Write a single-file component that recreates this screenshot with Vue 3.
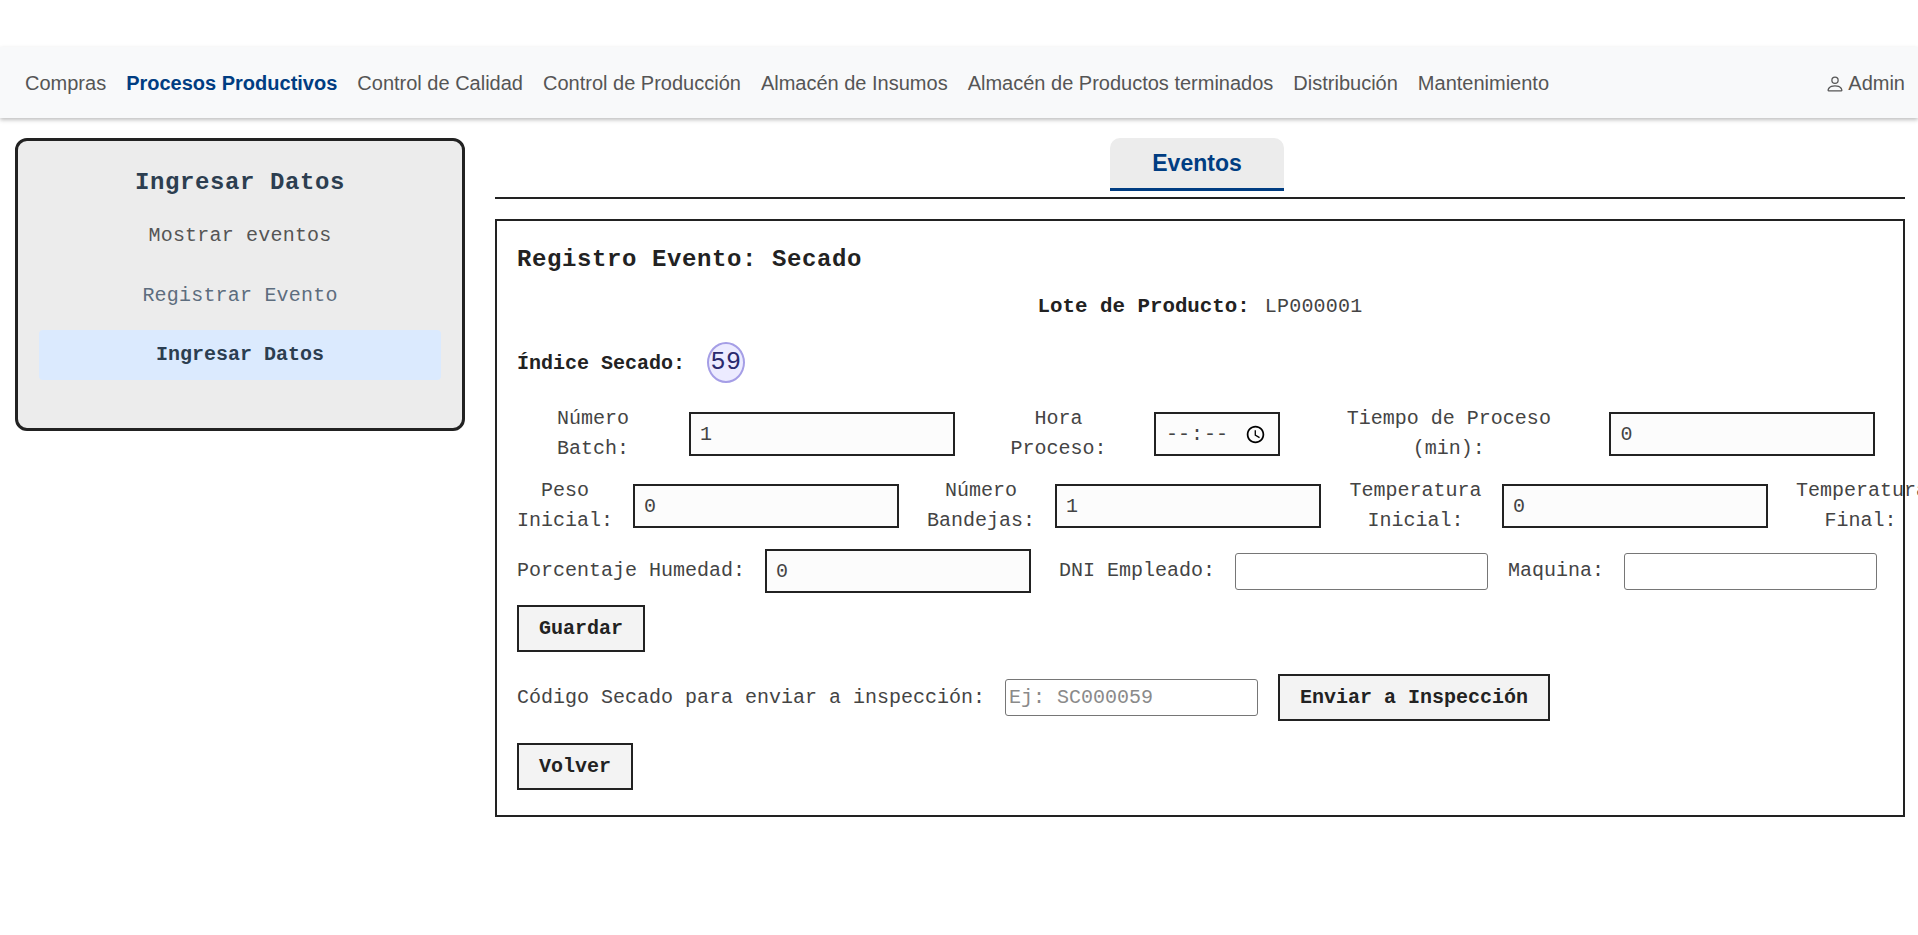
<template>
  <div class="page">
    <nav class="navbar">
      <a
        v-for="link in navLinks"
        :key="link"
        class="nav-link"
        :class="{ active: link === 'Procesos Productivos' }"
      >{{ link }}</a>
      <a class="nav-user">
        <svg width="20" height="20" viewBox="0 0 16 16" fill="currentColor">
          <path d="M8 8a3 3 0 1 0 0-6 3 3 0 0 0 0 6m2-3a2 2 0 1 1-4 0 2 2 0 0 1 4 0m4 8c0 1-1 1-1 1H3s-1 0-1-1 1-4 6-4 6 3 6 4m-1-.004c-.001-.246-.154-.986-.832-1.664C11.516 10.68 10.289 10 8 10s-3.516.68-4.168 1.332c-.678.678-.83 1.418-.832 1.664z" />
        </svg>
        Admin
      </a>
    </nav>

    <div class="main">
      <aside class="sidebar">
        <h3 class="sidebar-title">Ingresar Datos</h3>
        <ul class="sidebar-menu">
          <li>Mostrar eventos</li>
          <li class="registrar">Registrar Evento</li>
          <li class="current">Ingresar Datos</li>
        </ul>
      </aside>

      <section class="content">
        <div class="tabs">
          <button class="tab">Eventos</button>
        </div>

        <div class="panel">
          <h2 class="panel-title">Registro Evento: Secado</h2>
          <p class="lote"><strong>Lote de Producto:</strong> <span>LP000001</span></p>

          <div class="indice">
            <strong>Índice Secado:</strong>
            <span class="badge">59</span>
          </div>

          <form class="form" @submit.prevent>
            <div class="row">
              <label class="w-batch">Número Batch:</label>
              <input class="field" type="number" value="1" />
              <label class="w-hora">Hora Proceso:</label>
              <input class="field time" type="time" />
              <label class="w-tiempo">Tiempo de Proceso (min):</label>
              <input class="field" type="number" value="0" />
            </div>

            <div class="row">
              <label class="w-peso">Peso Inicial:</label>
              <input class="field" type="number" value="0" />
              <label class="w-bandejas">Número Bandejas:</label>
              <input class="field" type="number" value="1" />
              <label class="w-temp">Temperatura Inicial:</label>
              <input class="field" type="number" value="0" />
              <label class="w-final">Temperatura Final:</label>
              <input class="field" type="number" value="0" />
            </div>

            <div class="row single">
              <label>Porcentaje Humedad:</label>
              <input class="field" type="number" value="0" />
              <label class="dni">DNI Empleado:</label>
              <input class="plain" type="text" />
              <label class="maquina">Maquina:</label>
              <input class="plain" type="text" />
            </div>

            <button class="btn guardar">Guardar</button>

            <div class="enviar">
              <label>Código Secado para enviar a inspección:</label>
              <input class="plain" type="text" placeholder="Ej: SC000059" />
              <button class="btn">Enviar a Inspección</button>
            </div>

            <button class="btn volver">Volver</button>
          </form>
        </div>
      </section>
    </div>
  </div>
</template>

<script setup>
const navLinks = [
  "Compras",
  "Procesos Productivos",
  "Control de Calidad",
  "Control de Producción",
  "Almacén de Insumos",
  "Almacén de Productos terminados",
  "Distribución",
  "Mantenimiento",
];
</script>

<style>
html,
body {
  overflow: hidden;
  background: #fff;
}
</style>

<style scoped>
.page {
  width: 1918px;
  height: 935px;
  overflow: hidden;
  padding-top: 47px;
  box-sizing: border-box;
  font-family: "Liberation Mono", monospace;
  font-size: 20px;
  color: #444;
}

.navbar {
  height: 71px;
  box-sizing: border-box;
  display: flex;
  align-items: center;
  gap: 20px;
  padding: 2px 13px 0 25px;
  background: #f8f9fa;
  box-shadow: 0 2px 4px rgba(0, 0, 0, 0.25);
  font-family: "Liberation Sans", Arial, sans-serif;
  color: #555;
}

.nav-link.active {
  color: #003d82;
  font-weight: 700;
}

.nav-user {
  margin-left: auto;
  display: flex;
  align-items: center;
  gap: 3px;
}

.main {
  display: flex;
  align-items: flex-start;
  gap: 30px;
  padding: 20px 13px 0 15px;
}

.sidebar {
  width: 450px;
  flex: none;
  box-sizing: border-box;
  padding: 27px 21px 48px;
  background: #ececec;
  border: 3px solid #222;
  border-radius: 12px;
}

.sidebar-title {
  margin: 0 0 13px;
  font-size: 24px;
  line-height: 30px;
  letter-spacing: 0.6px;
  text-align: center;
  color: #2c3e50;
}

.sidebar-menu {
  list-style: none;
  margin: 0;
  padding: 0;
  display: flex;
  flex-direction: column;
  gap: 9.5px;
  text-align: center;
}

.sidebar-menu li {
  height: 50px;
  line-height: 50px;
  letter-spacing: 0.2px;
  color: #555;
}

.sidebar-menu .registrar {
  color: #5d6d7e;
}

.sidebar-menu .current {
  background: #dbeafe;
  border-radius: 4px;
  color: #2c3e50;
  font-weight: 700;
  letter-spacing: 0;
}

.content {
  flex: 1;
  min-width: 0;
}

.tabs {
  display: flex;
  justify-content: center;
  padding: 0 6px 6px 0;
  border-bottom: 2px solid #222;
}

.tab {
  width: 174px;
  height: 53px;
  border: 0;
  border-bottom: 3px solid #003d82;
  border-radius: 10px 10px 0 0;
  background: #ececec;
  color: #003d82;
  font-family: "Liberation Sans", Arial, sans-serif;
  font-size: 23px;
  font-weight: 700;
}

.panel {
  margin-top: 20px;
  padding: 24px 20px 25px;
  border: 2px solid #222;
}

.panel-title {
  margin: 0;
  font-size: 24px;
  line-height: 30px;
  letter-spacing: 0.6px;
  color: #222;
}

.lote {
  margin: 17px 0 0;
  line-height: 30px;
  text-align: center;
}

.lote strong {
  color: #222;
  font-size: 20.8px;
}

.lote span {
  margin-left: 3px;
  letter-spacing: 0.2px;
}

.indice strong {
  padding-top: 2px;
  color: #222;
}

.indice {
  margin-top: 20px;
  display: flex;
  align-items: center;
  gap: 22px;
}

.badge {
  width: 38px;
  height: 41px;
  box-sizing: border-box;
  display: flex;
  align-items: center;
  justify-content: center;
  border: 2px solid #a59ee6;
  border-radius: 50%;
  background: #ecebff;
  color: #2a2a6e;
  font-size: 25px;
  letter-spacing: 0.6px;
}

.form {
  margin-top: 21px;
}

.row {
  display: flex;
  align-items: center;
  height: 60px;
  margin-bottom: 12px;
  white-space: nowrap;
}

.row.single {
  height: 44px;
  margin-top: 13px;
}

.row label {
  flex: none;
  margin-right: 20px;
  line-height: 30px;
  text-align: center;
  white-space: normal;
}

.field {
  flex: none;
  width: 265.6px;
  height: 44px;
  margin-right: 28.4px;
  box-sizing: border-box;
  padding: 0 9px;
  border: 2px solid #222;
  background: #fcfcfc;
  color: #444;
  font-family: inherit;
  font-size: 20px;
  appearance: textfield;
  outline: none;
}

.field.time {
  width: 126px;
  appearance: auto;
}

.plain {
  flex: none;
  width: 253px;
  height: 37px;
  box-sizing: border-box;
  padding: 0 8px 0 3px;
  border: 1px solid #767676;
  border-radius: 3px;
  background: #fff;
  font-family: inherit;
  font-size: 20px;
}

.plain::placeholder {
  color: #8a8a8a;
}

.w-batch {
  width: 152px;
}

.w-hora {
  width: 151px;
}

.w-tiempo {
  width: 281px;
}

.w-peso {
  width: 96px;
}

.w-bandejas {
  width: 108px;
}

.w-temp {
  width: 133px;
}

.w-final {
  width: 129px;
}

.maquina {
  margin-left: 20px;
}

.btn {
  display: block;
  height: 47px;
  padding: 0 20px;
  box-sizing: border-box;
  border: 2px solid #222;
  background: #f3f3f3;
  color: #222;
  font-family: inherit;
  font-size: 20px;
  font-weight: 700;
}

.enviar {
  margin-top: 22px;
  display: flex;
  align-items: center;
  gap: 20px;
}

.enviar label {
  line-height: 30px;
}

.volver {
  margin-top: 22px;
}
</style>
